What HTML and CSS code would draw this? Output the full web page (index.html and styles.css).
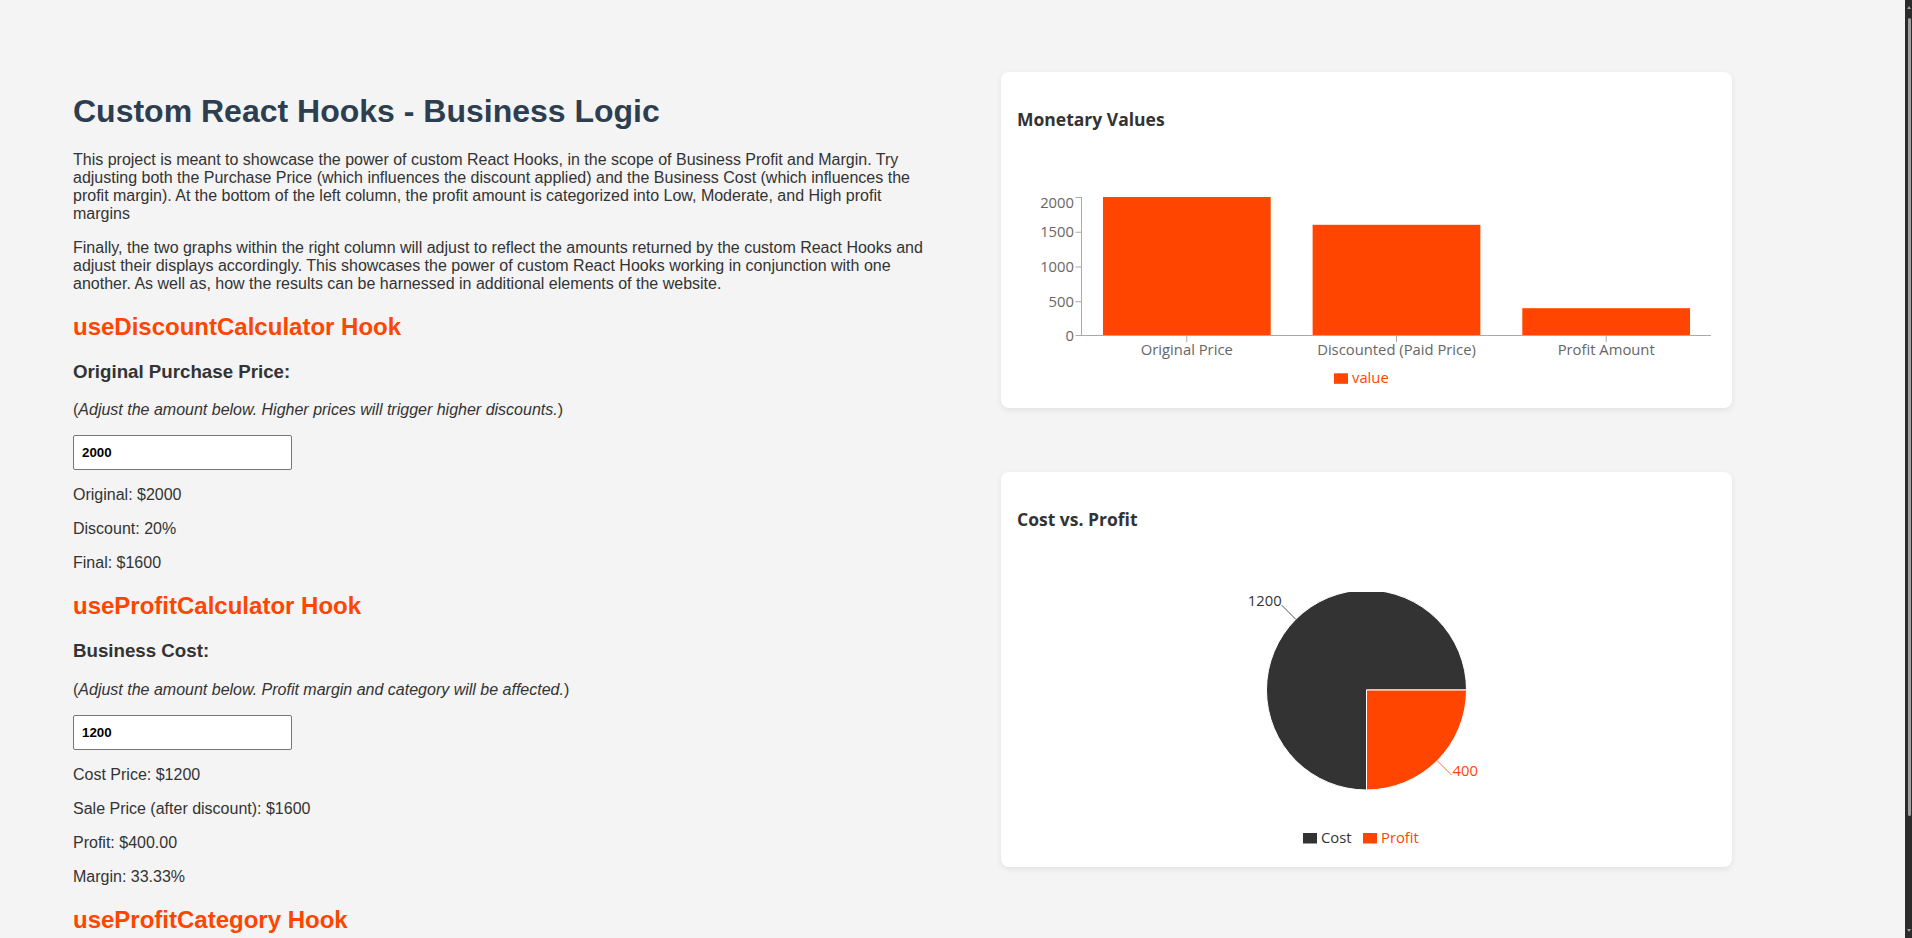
FILE: index.html
```html
<!DOCTYPE html>
<html lang="en">
<head>
<meta charset="utf-8">
<title>Custom React Hooks - Business Logic</title>
<link rel="stylesheet" href="styles.css">
</head>
<body>
<div class="page">
  <main class="left">
    <h1 class="title">Custom React Hooks - Business Logic</h1>
    <p>This project is meant to showcase the power of custom React Hooks, in the scope of Business Profit and Margin. Try adjusting both the Purchase Price (which influences the discount applied) and the Business Cost (which influences the profit margin). At the bottom of the left column, the profit amount is categorized into Low, Moderate, and High profit margins</p>
    <p>Finally, the two graphs within the right column will adjust to reflect the amounts returned by the custom React Hooks and adjust their displays accordingly. This showcases the power of custom React Hooks working in conjunction with one another. As well as, how the results can be harnessed in additional elements of the website.</p>

    <h2 class="hook">useDiscountCalculator Hook</h2>
    <h3 class="label">Original Purchase Price:</h3>
    <p>(<em>Adjust the amount below. Higher prices will trigger higher discounts.</em>)</p>
    <input class="amount" type="text" value="2000">
    <p>Original: $2000</p>
    <p>Discount: 20%</p>
    <p>Final: $1600</p>

    <h2 class="hook">useProfitCalculator Hook</h2>
    <h3 class="label">Business Cost:</h3>
    <p>(<em>Adjust the amount below. Profit margin and category will be affected.</em>)</p>
    <input class="amount" type="text" value="1200">
    <p>Cost Price: $1200</p>
    <p>Sale Price (after discount): $1600</p>
    <p>Profit: $400.00</p>
    <p>Margin: 33.33%</p>

    <h2 class="hook">useProfitCategory Hook</h2>
    <p>Profit Category: Moderate Profit</p>
  </main>

  <aside class="right">
    <section class="card">
      <h3 class="card-title">Monetary Values</h3>
      <svg class="chart" width="699" height="200" viewBox="0 0 699 200">
        <g class="bars">
          <rect x="85.97" y="5" width="167.73" height="139"></rect>
          <rect x="295.63" y="32.8" width="167.73" height="111.2"></rect>
          <rect x="505.3" y="116.2" width="167.73" height="27.8"></rect>
        </g>
        <g class="axis-line">
          <line x1="64.5" y1="5" x2="64.5" y2="144"></line>
          <line x1="64.5" y1="143.5" x2="694" y2="143.5"></line>
          <line x1="58.5" y1="5.5" x2="64.5" y2="5.5"></line>
          <line x1="58.5" y1="40.25" x2="64.5" y2="40.25"></line>
          <line x1="58.5" y1="75" x2="64.5" y2="75"></line>
          <line x1="58.5" y1="109.75" x2="64.5" y2="109.75"></line>
          <line x1="58.5" y1="143.5" x2="64.5" y2="143.5"></line>
          <line x1="169.8" y1="144" x2="169.8" y2="150"></line>
          <line x1="379.5" y1="144" x2="379.5" y2="150"></line>
          <line x1="589.2" y1="144" x2="589.2" y2="150"></line>
        </g>
        <g class="tick-text y-ticks">
          <text x="57" y="10.5" dy="0.355em">2000</text>
          <text x="57" y="39.75" dy="0.355em">1500</text>
          <text x="57" y="74.5" dy="0.355em">1000</text>
          <text x="57" y="109.25" dy="0.355em">500</text>
          <text x="57" y="144" dy="0.355em">0</text>
        </g>
        <g class="tick-text x-ticks">
          <text x="169.8" y="163">Original Price</text>
          <text x="379.5" y="163">Discounted (Paid Price)</text>
          <text x="589.2" y="163">Profit Amount</text>
        </g>
        <g class="legend">
          <rect class="fill-orange" x="317" y="181.3" width="14" height="10.5"></rect>
          <text class="fill-orange" x="335" y="190.5">value</text>
        </g>
      </svg>
    </section>

    <section class="card">
      <h3 class="card-title">Cost vs. Profit</h3>
      <svg class="chart" width="699" height="259" viewBox="0 0 699 259">
        <path class="slice fill-dark" d="M349.5,98 L449.5,98 A100,100 0 1 0 349.5,198 Z"></path>
        <path class="slice fill-orange" d="M349.5,98 L349.5,198 A100,100 0 0 0 449.5,98 Z"></path>
        <line class="label-line stroke-dark" x1="278.8" y1="27.3" x2="264.6" y2="13.1"></line>
        <line class="label-line stroke-orange" x1="420.2" y1="168.7" x2="434.4" y2="182.9"></line>
        <text class="pie-label fill-dark end" x="264.6" y="14">1200</text>
        <text class="pie-label fill-orange" x="435.5" y="184">400</text>
        <g class="legend">
          <rect class="fill-dark" x="286" y="241" width="14" height="10.5"></rect>
          <text class="fill-dark" x="304" y="250.5">Cost</text>
          <rect class="fill-orange" x="346" y="241" width="14" height="10.5"></rect>
          <text class="fill-orange" x="364" y="250.5">Profit</text>
        </g>
      </svg>
    </section>
  </aside>
</div>

<div class="fake-scrollbar" aria-hidden="true">
  <span class="sb-arrow sb-up"></span>
  <span class="sb-thumb"></span>
  <span class="sb-arrow sb-down"></span>
</div>
</body>
</html>
```

FILE: styles.css
```css
html {
  background: #f4f4f4;
  scrollbar-width: none;
}

html::-webkit-scrollbar {
  display: none;
}

body {
  margin: 0;
  background: #f4f4f4;
  color: #333;
  font-family: "Liberation Sans", Arial, sans-serif;
  font-size: 16px;
}

.page {
  display: grid;
  grid-template-columns: 857px 731px;
  column-gap: 71px;
  align-items: start;
  padding: 72px 0 76px 73px;
}

.left p {
  margin: 16px 0;
  line-height: normal;
}

.title {
  margin: 20.5px 0 21.44px;
  font-size: 32px;
  font-weight: bold;
  color: #2c3e50;
}

.hook {
  margin: 19.92px 0;
  font-size: 24px;
  font-weight: bold;
  color: #ff4500;
}

.label {
  margin: 18.72px 0;
  font-size: 18.72px;
  font-weight: bold;
  color: #333;
}

.amount {
  display: block;
  box-sizing: border-box;
  width: 219px;
  height: 35px;
  margin: 0;
  padding: 0 8px;
  border: 1px solid #767676;
  border-radius: 2px;
  background: #fff;
  color: #000;
  font-family: "Liberation Sans", Arial, sans-serif;
  font-size: 13.33px;
  font-weight: bold;
}

.right {
  display: flex;
  flex-direction: column;
  gap: 64px;
}

.card {
  background: #fff;
  border-radius: 8px;
  box-shadow: 0 2px 6px rgba(0, 0, 0, 0.08);
  padding: 1px 16px 16px;
}

.card-title {
  margin: 34px 0 60px;
  line-height: 25px;
  font-family: "Open Sans", "Noto Sans", sans-serif;
  font-size: 17.5px;
  font-weight: bold;
  color: #333;
}

.chart {
  display: block;
  font-family: "Open Sans", "Noto Sans", sans-serif;
  font-size: 14.8px;
}

.bars rect {
  fill: #ff4500;
}

.axis-line line {
  stroke: #aaa;
  stroke-width: 1;
}

.tick-text text {
  fill: #666;
}

.y-ticks text {
  text-anchor: end;
}

.x-ticks text {
  text-anchor: middle;
}

.fill-orange {
  fill: #ff4500;
}

.fill-dark {
  fill: #333;
}

.slice {
  stroke: #fff;
  stroke-width: 1;
}

.label-line {
  stroke-width: 1;
  fill: none;
}

.stroke-dark {
  stroke: #555;
}

.stroke-orange {
  stroke: #ff6a33;
}

.pie-label.end {
  text-anchor: end;
}

/* window scrollbar as seen in the capture */
.fake-scrollbar {
  position: fixed;
  top: 0;
  right: 0;
  width: 7px;
  height: 100vh;
  background: #2b2b2b;
}

.sb-thumb {
  position: absolute;
  top: 18px;
  left: 3px;
  width: 3px;
  height: 798px;
  border-radius: 2px;
  background: #9f9f9f;
}

.sb-arrow {
  position: absolute;
  left: 2px;
  width: 0;
  height: 0;
  border-left: 2.5px solid transparent;
  border-right: 2.5px solid transparent;
}

.sb-up {
  top: 6px;
  border-bottom: 3px solid #9f9f9f;
}

.sb-down {
  bottom: 6px;
  border-top: 3px solid #9f9f9f;
}
```
